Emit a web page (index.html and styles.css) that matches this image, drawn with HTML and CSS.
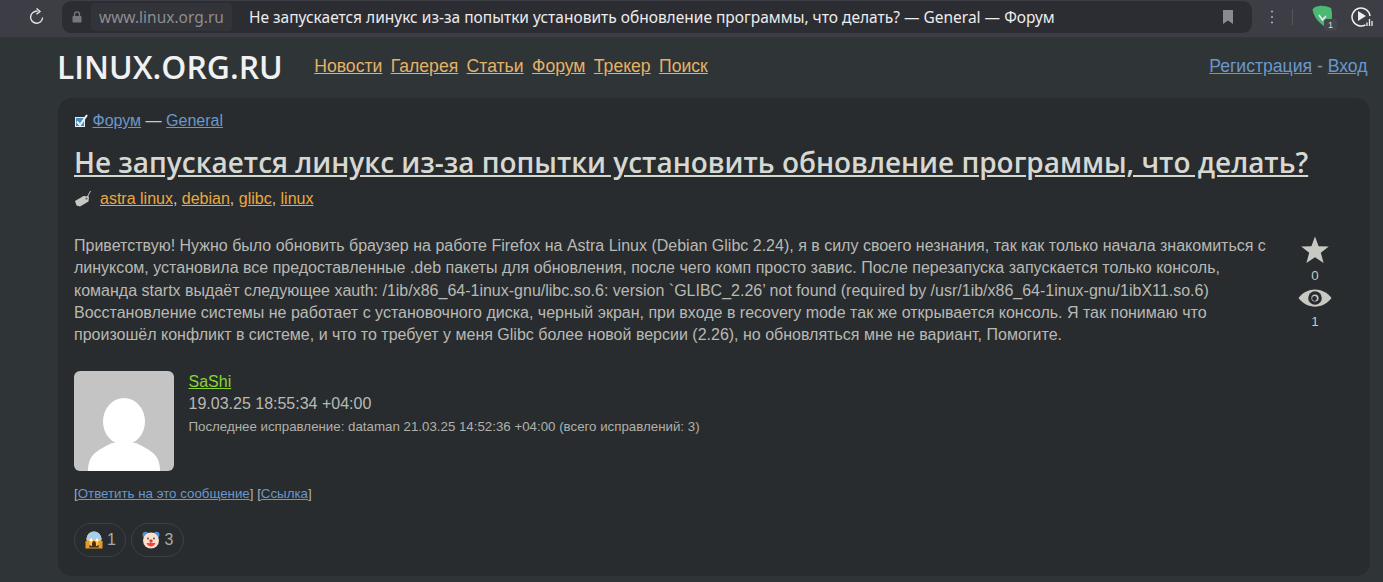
FILE: index.html
```html
<!DOCTYPE html>
<html lang="ru">
<head>
<meta charset="utf-8">
<title>Форум</title>
<link rel="stylesheet" href="styles.css">
</head>
<body>
<div class="chrome">
  <svg class="reload" viewBox="0 0 18 18" width="18" height="18"><path d="M14.6 9.5A6 6 0 1 1 9.5 3.3" fill="none" stroke="#e4e4e6" stroke-width="1.4"/><path d="M8.5 0.5L12 3.4L8.5 6.2" fill="none" stroke="#e4e4e6" stroke-width="1.4"/></svg>
  <div class="urlbar">
    <svg class="lock" viewBox="0 0 12 12" width="12" height="12"><path d="M3.5 5V3.4a2.5 2.5 0 0 1 5 0V5" fill="none" stroke="#77777d" stroke-width="1.3"/><rect x="1.5" y="5" width="9" height="6.5" rx="1" fill="#77777d"/></svg>
    <span class="domain">www.linux.org.ru</span>
    <span class="pagetitle">Не запускается линукс из-за попытки установить обновление программы, что делать? — General — Форум</span>
    <svg class="bookmark" viewBox="0 0 10 14" width="10" height="14"><path d="M0 0H10V14L5 10.5L0 14Z" fill="#8a8a8f"/></svg>
  </div>
  <div class="tools">
    <svg viewBox="0 0 4 16" width="4" height="16"><circle cx="2" cy="2.5" r="1.1" fill="#a9a9ae"/><circle cx="2" cy="8" r="1.1" fill="#a9a9ae"/><circle cx="2" cy="13.5" r="1.1" fill="#a9a9ae"/></svg>
    <span class="sep"></span>
    <span class="shield">
      <svg viewBox="0 0 22 24" width="22" height="24"><path d="M0.500 5C1 2.500 4 1.500 7 1C11 0.500 15 1.500 19 3C21 10 20 17 16.500 23.500C9 20 2.500 14 0.500 5Z" fill="#4cb873"/><path d="M7 10L10.500 15L14 11" fill="none" stroke="#eef" stroke-width="1.500"/></svg>
      <span class="badge">1</span>
    </span>
    <svg viewBox="0 0 24 22" width="24" height="22"><path d="M14.500 18.800A9 9 0 1 1 19 10" fill="none" stroke="#eeeef0" stroke-width="1.500"/><path d="M7 5L15 10L7 15Z" fill="#eeeef0"/><path d="M16 20V16.500M18.500 20V13M21 20V15" stroke="#eeeef0" stroke-width="1.300"/></svg>
  </div>
</div>
<header class="site-head">
  <a class="logo" href="#">LINUX.ORG.RU</a>
  <nav class="menu">
    <a href="#">Новости</a><a href="#">Галерея</a><a href="#">Статьи</a><a href="#">Форум</a><a href="#">Трекер</a><a href="#">Поиск</a>
  </nav>
  <div class="auth"><a href="#">Регистрация</a> - <a href="#">Вход</a></div>
</header>
<main class="card">
  <div class="crumbs">
    <svg class="forum-ic" viewBox="0 0 14 14" width="14" height="14"><rect x="1" y="3" width="10" height="10" fill="#e8eef4"/><rect x="2" y="4" width="8" height="8" fill="#3f8fc4"/><path d="M3 7.500L6 11L13 1" fill="none" stroke="#eef2f5" stroke-width="2"/></svg>
    <a href="#">Форум</a> — <a href="#">General</a>
  </div>
  <h1 class="title"><a href="#">Не запускается линукс из-за попытки установить обновление программы, что делать?</a></h1>
  <div class="tags">
    <svg class="tag-ic" viewBox="0 0 18 18" width="18" height="18"><path d="M1 11L9.500 6L15 6.500L14.500 11.500L6 16.500L2.500 15.500Z" fill="#c9c9c4"/><circle cx="12.500" cy="8.500" r="1" fill="#282c2e"/><path d="M12.500 8.500L16.500 1" fill="none" stroke="#c9c9c4" stroke-width="1"/></svg>
    <span><a href="#">astra linux</a>, <a href="#">debian</a>, <a href="#">glibc</a>, <a href="#">linux</a></span>
  </div>
  <div class="body-row">
    <div class="msg">Приветствую! Нужно было обновить браузер на работе Firefox на Astra Linux (Debian Glibc 2.24), я в силу своего незнания, так как только начала знакомиться с линуксом, установила все предоставленные .deb пакеты для обновления, после чего комп просто завис. После перезапуска запускается только консоль, команда startx выдаёт следующее xauth: /1ib/x86_64-1inux-gnu/libc.so.6: version `GLIBC_2.26’ not found (required by /usr/1ib/x86_64-1inux-gnu/1ibX11.so.6) Восстановление системы не работает с установочного диска, черный экран, при входе в recovery mode так же открывается консоль. Я так понимаю что произошёл конфликт в системе, и что то требует у меня Glibc более новой версии (2.26), но обновляться мне не вариант, Помогите.</div>
    <aside class="stats">
      <svg viewBox="0 0 28 28" width="28" height="28"><path d="M14 0.500L17.600 10.200L27.800 10.500L19.800 16.800L22.600 27L14 21.200L5.400 27L8.200 16.800L0.200 10.500L10.400 10.200Z" fill="#c9c9c4"/></svg>
      <span class="num">0</span>
      <svg class="eye" viewBox="0 0 34 20" width="34" height="20"><path d="M0.500 10C9 -1.500 25 -1.500 33.500 10C25 21.500 9 21.500 0.500 10Z" fill="#c9c9c4"/><circle cx="17" cy="10" r="6.800" fill="#282c2e"/><circle cx="17" cy="10" r="3.600" fill="#c9c9c4"/><circle cx="16.500" cy="10.500" r="2.400" fill="#282c2e"/></svg>
      <span class="num">1</span>
    </aside>
  </div>
  <div class="author">
    <div class="avatar">
      <svg viewBox="0 0 100 100" width="100" height="100"><rect width="100" height="100" fill="#c4c4c4"/><ellipse cx="50" cy="50.500" rx="21" ry="23.500" fill="#fff"/><path d="M14 100C14 84 22 80 38 72H62C78 80 86 84 86 100Z" fill="#fff"/></svg>
    </div>
    <div class="meta">
      <a class="nick" href="#">SaShi</a>
      <div class="date">19.03.25 18:55:34 +04:00</div>
      <div class="edit">Последнее исправление: dataman 21.03.25 14:52:36 +04:00 (всего исправлений: 3)</div>
    </div>
  </div>
  <div class="actions">[<a href="#">Ответить на это сообщение</a>] [<a href="#">Ссылка</a>]</div>
  <div class="reactions">
    <span class="react">
      <svg viewBox="0 0 18 18" width="18" height="18"><circle cx="9" cy="8" r="7.500" fill="#f6c544"/><path d="M1.500 8A7.500 7.500 0 0 1 16.500 8V9H1.500Z" fill="#a9cdec"/><circle cx="6" cy="9" r="1.400" fill="#fff"/><circle cx="12" cy="9" r="1.400" fill="#fff"/><ellipse cx="9" cy="13.500" rx="2" ry="3.500" fill="#4a2a10"/><path d="M0.500 17.500V10H4.500V17.500M13.500 17.500V10H17.500V17.500" fill="#e9982f"/><path d="M4.500 17.500H13.500V16.500H4.500Z" fill="#e9982f"/></svg>
      1
    </span>
    <span class="react">
      <svg viewBox="0 0 18 18" width="18" height="18"><circle cx="3.500" cy="3.800" r="3" fill="#4f8fd6"/><circle cx="14.500" cy="3.800" r="3" fill="#4f8fd6"/><circle cx="9" cy="9.500" r="8" fill="#fbdfcc"/><circle cx="6" cy="7.500" r="1" fill="#555"/><circle cx="12" cy="7.500" r="1" fill="#555"/><circle cx="9" cy="10" r="1.700" fill="#e33"/><path d="M4.500 12C6 16.500 12 16.500 13.500 12Z" fill="#e44"/></svg>
      3
    </span>
  </div>
</main>
</body>
</html>
```
FILE: styles.css
```css
* { box-sizing: border-box; }
html, body { margin: 0; height: 582px; overflow: hidden; }
body {
  background: #2f3436;
  font-family: "Liberation Sans", Arial, sans-serif;
  font-size: 16px;
  color: #c9c9c4;
}
svg { display: block; flex: none; }
.chrome {
  height: 38px;
  background: #3d3d45;
  border-bottom: 1px solid #34343b;
  display: flex;
  align-items: center;
  padding: 0 8px 3px 28px;
}
.reload { margin-right: 16px; }
.urlbar {
  flex: 1;
  height: 32px;
  background: #2c2c33;
  border-radius: 9px;
  display: flex;
  align-items: center;
  padding: 0 19px 0 9px;
  margin-right: 18px;
}
.lock { margin-right: 8px; }
.domain {
  background: #33333a;
  color: #8d8d92;
  font: 15.5px "Noto Sans", sans-serif;
  padding: 3px 8px;
  border-radius: 4px;
  margin-right: 17px;
  white-space: nowrap;
}
.pagetitle {
  flex: 1;
  color: #ececec;
  font: 15.5px "Noto Sans", sans-serif;
  white-space: nowrap;
}
.tools { display: flex; align-items: center; gap: 18px; }
.sep { width: 1px; height: 16px; background: #55555c; }
.shield { position: relative; display: block; margin-left: 1px; margin-right: -1px; }
.badge {
  position: absolute;
  right: -3px;
  bottom: -2px;
  width: 13px;
  height: 12px;
  line-height: 12px;
  border-radius: 3px;
  text-align: center;
  background: #45454c;
  color: #ddd;
  font-size: 9px;
}
.site-head {
  display: flex;
  align-items: center;
  height: 59px;
  padding: 0 15.500px 2px 57px;
}
.logo {
  font: 600 31.900px "Open Sans", sans-serif;
  color: #f1f1f1;
  text-decoration: none;
  margin-right: 31.500px;
  white-space: nowrap;
}
.menu { display: flex; gap: 8.400px; font-size: 17.600px; }
.menu a { color: #e4b266; }
.auth { margin-left: auto; font-size: 17.600px; color: #8a94a0; }
.auth a { color: #6b97cb; }
.card {
  margin: 1px 13px 0 58px;
  height: 478px;
  background: #282c2e;
  border-radius: 14px;
  padding: 13px 8px 12px 16px;
}
.crumbs { display: flex; align-items: center; gap: 4.500px; height: 20px; color: #c9c9c4; }
.crumbs a { color: #6b97cb; }
.title {
  margin: 13px 0 0;
  font: 600 27.950px/36px "Open Sans", sans-serif;
  white-space: nowrap;
}
.title a { color: #d8d8d2; }
.tags { display: flex; align-items: center; gap: 8px; margin-top: 9px; height: 20px; }
.tags a { color: #eba83f; }
.body-row { display: flex; margin-top: 26px; }
.msg { width: 1195px; line-height: 22.300px; color: #b9b9b4; flex: none; }
.stats {
  width: 92px;
  display: flex;
  flex-direction: column;
  align-items: center;
  padding-top: 1px;
}
.num { font-size: 13.300px; line-height: 16px; margin-top: 4px; }
.eye { margin-top: 4px; }
.stats .num:last-child { margin-top: 6px; }
.author { display: flex; gap: 14.500px; margin-top: 25px; }
.avatar { width: 100px; height: 100px; border-radius: 6px; overflow: hidden; }
.meta { padding-top: 1px; }
.nick { color: #8ad534; display: block; line-height: 20px; }
.date { line-height: 24px; color: #b9b9b4; }
.edit { font-size: 13.300px; line-height: 22px; color: #b0b0ab; }
.actions { font-size: 13.300px; margin-top: 15px; line-height: 15px; color: #b0b0ab; }
.actions a { color: #6b97cb; }
.reactions { display: flex; gap: 5px; margin-top: 22px; }
.react {
  display: flex;
  align-items: center;
  gap: 4px;
  height: 34px;
  padding: 0 9.500px 0 10px;
  border: 1px solid #3d4244;
  border-radius: 17px;
  color: #a9a9a4;
}
```
